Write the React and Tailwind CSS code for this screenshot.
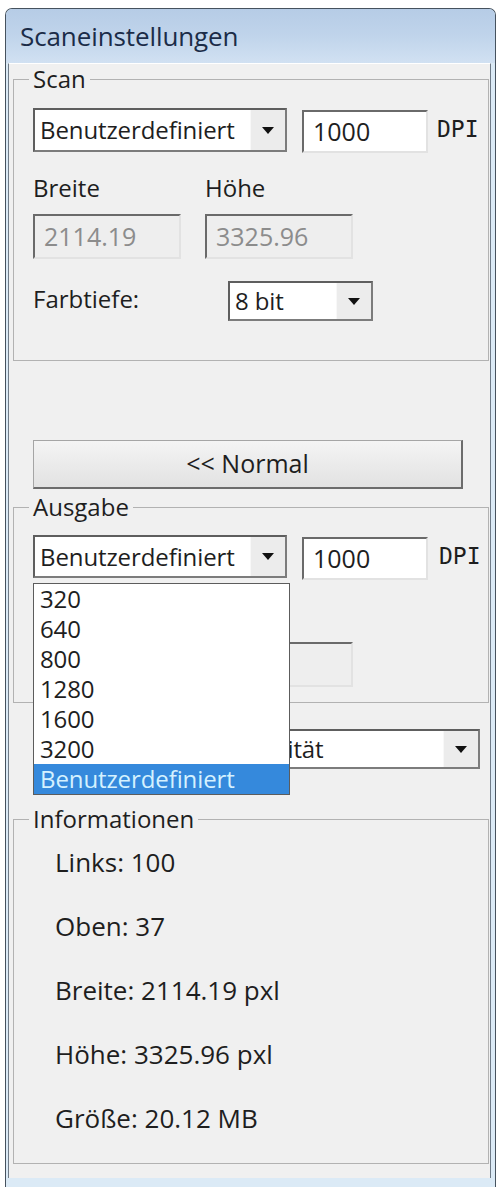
import React from 'react';

const font = { fontFamily: '"Open Sans", "Noto Sans", sans-serif' };

function Arrow() {
  return (
    <svg width="12" height="7" viewBox="0 0 12 7" className="block">
      <polygon points="0,0 12,0 6,7" fill="#111" />
    </svg>
  );
}

function Combo({ value, width, height, arrowWidth = 35 }) {
  return (
    <div
      className="flex bg-white border-2 border-[#7c7c7c] border-t-[#5e5e5e] border-l-[#5e5e5e]"
      style={{ width, height }}
    >
      <div className="flex-1 flex items-center pl-[5px] text-[24px] tracking-[-0.1px] text-[#1e1e1e] whitespace-nowrap overflow-hidden">
        {value}
      </div>
      <div
        className="flex items-center justify-center bg-[#ececec] border-l border-[#f8f8f8]"
        style={{ width: arrowWidth }}
      >
        <Arrow />
      </div>
    </div>
  );
}

function TextBox({ value, width, height, disabled }) {
  return (
    <div
      className={`flex items-center pl-[9px] text-[25px] border-2 border-t-[#6a6a6a] border-l-[#6a6a6a] border-r-[#e2e2e2] border-b-[#e2e2e2] ${
        disabled ? 'bg-[#eeeeee] text-[#8c8c8c]' : 'bg-white text-[#1e1e1e]'
      }`}
      style={{ width, height }}
    >
      {value}
    </div>
  );
}

function Group({ title, children, className = '' }) {
  return (
    <fieldset className={`ml-[4px] w-[476px] border border-[#b2b2b2] ${className}`}>
      <legend className="ml-[15px] px-[4px] text-[24px] leading-[24px] text-[#1e1e1e]">{title}</legend>
      {children}
    </fieldset>
  );
}

const DPI = () => (
  <span className="text-[23px] text-[#1e1e1e]" style={{ fontFamily: '"DejaVu Sans Mono", monospace' }}>
    DPI
  </span>
);

const dpiOptions = ['320', '640', '800', '1280', '1600', '3200', 'Benutzerdefiniert'];

const infos = ['Links: 100', 'Oben: 37', 'Breite: 2114.19 pxl', 'Höhe: 3325.96 pxl', 'Größe: 20.12 MB'];

export default function App() {
  return (
    <div className="w-[498px] h-[1187px] bg-white overflow-hidden pt-[8px] pl-[5px]" style={font}>
      <div className="w-[491px] h-[1179px] flex flex-col rounded-t-[7px] border border-b-0 border-[#46525e] bg-[#dbeaf6] overflow-hidden">
        {/* title bar */}
        <div className="h-[54px] shrink-0 flex items-center pl-[14px] bg-gradient-to-b from-[#b6cce6] via-[#c0d4eb] to-[#d1e1f2] text-[26px] tracking-[-0.1px] text-[#1b2c48]">
          Scaneinstellungen
        </div>

        {/* client area */}
        <div className="ml-[2px] w-[483px] h-[1115px] shrink-0 bg-[#f0f0f0] border-x border-t border-x-[#6f7b88] border-t-white pt-[3px] text-[#1e1e1e]">
          <Group title="Scan" className="pb-[39px]">
            <div className="flex items-start pl-[19px] mt-[17px]">
              <Combo value="Benutzerdefiniert" width={254} height={44} />
              <div className="ml-[15px] mt-[2px]">
                <TextBox value="1000" width={126} height={43} />
              </div>
              <div className="ml-[9px] mt-[4px]">
                <DPI />
              </div>
            </div>
            <div className="flex pl-[19px] mt-[23px] h-[24px] items-center text-[24px]">
              <span className="w-[172px]">Breite</span>
              <span>Höhe</span>
            </div>
            <div className="flex gap-[24px] pl-[19px] mt-[14px]">
              <TextBox value="2114.19" width={148} height={45} disabled />
              <TextBox value="3325.96" width={148} height={45} disabled />
            </div>
            <div className="flex items-center pl-[19px] mt-[22px]">
              <span className="w-[195px] text-[24px] -mt-[4px]">Farbtiefe:</span>
              <Combo value="8 bit" width={145} height={40} />
            </div>
          </Group>

          <button className="block ml-[24px] mt-[79px] w-[430px] h-[49px] text-[25px] text-[#1e1e1e] bg-gradient-to-b from-[#f4f4f4] to-[#e2e2e2] border border-[#a5a5a5] border-r-2 border-b-2 border-r-[#6c6c6c] border-b-[#6c6c6c]">
            &lt;&lt; Normal
          </button>

          <Group title="Ausgabe" className="mt-[6px] pb-[15px]">
            <div className="flex items-start pl-[19px] mt-[16px]">
              <div className="relative">
                <Combo value="Benutzerdefiniert" width={254} height={43} />
                <ul className="absolute z-10 left-0 top-[48px] w-[257px] bg-white border border-[#5c5c5c] text-[24px] tracking-[-0.1px] text-[#1e1e1e]">
                  {dpiOptions.map((opt) => (
                    <li
                      key={opt}
                      className={`h-[30px] leading-[30px] pl-[6px] ${
                        opt === 'Benutzerdefiniert' ? 'bg-[#3589dc] text-[#d4f1ff]' : ''
                      }`}
                    >
                      {opt}
                    </li>
                  ))}
                </ul>
              </div>
              <div className="ml-[15px] mt-[2px]">
                <TextBox value="1000" width={126} height={43} />
              </div>
              <div className="ml-[11px] mt-[4px]">
                <DPI />
              </div>
            </div>
            <div className="flex gap-[24px] pl-[19px] mt-[62px]">
              <TextBox value="" width={148} height={45} disabled />
              <TextBox value="" width={148} height={45} disabled />
            </div>
          </Group>

          <div className="flex items-center pl-[153px] mt-[26px]">
            <Combo value="Hohe Qualität" width={318} height={40} />
          </div>

          <Group title="Informationen" className="mt-[38px] pb-[30px]">
            <div className="flex flex-col gap-[34px] pl-[41px] mt-[16px] text-[26px]">
              {infos.map((line) => (
                <div key={line} className="h-[30px] leading-[30px] whitespace-nowrap">
                  {line}
                </div>
              ))}
            </div>
          </Group>
        </div>
      </div>
    </div>
  );
}
